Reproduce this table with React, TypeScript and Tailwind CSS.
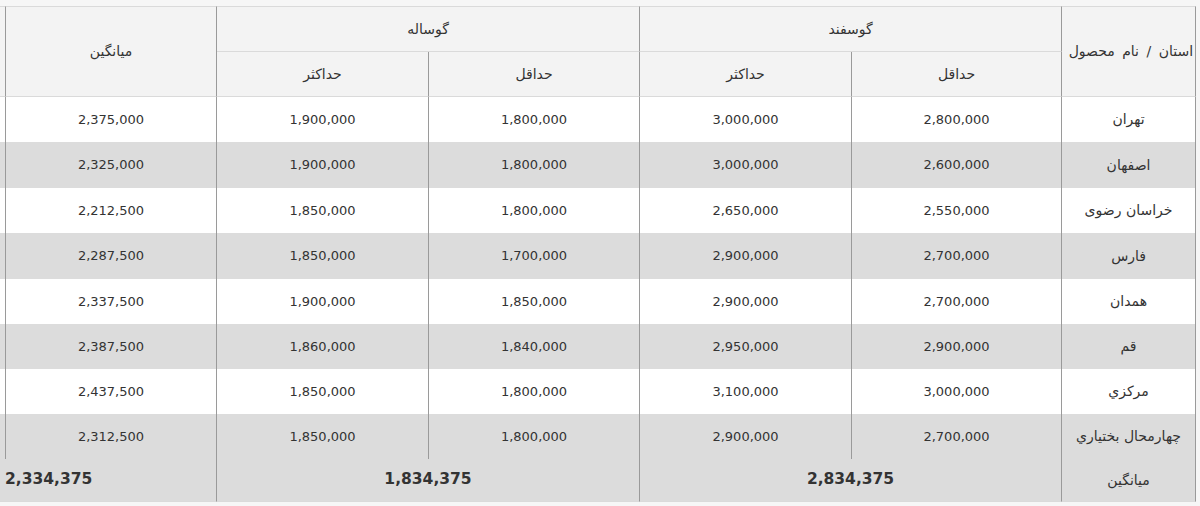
import React from "react";

type Row = { name: string; values: string[] };

// columns in rtl order: gusfand min, gusfand max, gusale min, gusale max, avg
const rows: Row[] = [
    { name: "تهران", values: ["2,800,000", "3,000,000", "1,800,000", "1,900,000", "2,375,000"] },
    { name: "اصفهان", values: ["2,600,000", "3,000,000", "1,800,000", "1,900,000", "2,325,000"] },
    { name: "خراسان رضوی", values: ["2,550,000", "2,650,000", "1,800,000", "1,850,000", "2,212,500"] },
    { name: "فارس", values: ["2,700,000", "2,900,000", "1,700,000", "1,850,000", "2,287,500"] },
    { name: "همدان", values: ["2,700,000", "2,900,000", "1,850,000", "1,900,000", "2,337,500"] },
    { name: "قم", values: ["2,900,000", "2,950,000", "1,840,000", "1,860,000", "2,387,500"] },
    { name: "مرکزي", values: ["3,000,000", "3,100,000", "1,800,000", "1,850,000", "2,437,500"] },
    { name: "چهارمحال بختياري", values: ["2,700,000", "2,900,000", "1,800,000", "1,850,000", "2,312,500"] },
];

const rowHeights = ["h-[45px]", "h-[46px]", "h-[45px]", "h-[46px]", "h-[45px]", "h-[45px]", "h-[45px]", "h-[45px]"];

const vLine = "border-r border-r-[#9a9a9a]";
const hLine = "border-[#dadada]";

export default function App() {
    return (
        <div
            className="w-[1200px] h-[506px] overflow-hidden bg-[#f6f6f6] pt-[6px] pr-[4px] text-[#333]"
            style={{ fontFamily: '"DejaVu Sans", Tahoma, sans-serif' }}
        >
            <table dir="rtl" className="w-[1196px] table-fixed border-separate border-spacing-0 text-[13px]">
                <colgroup>
                    <col className="w-[134px]" />
                    <col className="w-[210px]" />
                    <col className="w-[212px]" />
                    <col className="w-[211px]" />
                    <col className="w-[212px]" />
                    <col className="w-[211px]" />
                    <col className="w-[6px]" />
                </colgroup>
                <thead className="bg-[#f3f3f3] text-[14px]">
                    <tr className="h-[46px]">
                        <th rowSpan={2} className={`${vLine} border-t border-b ${hLine} font-normal whitespace-nowrap text-right pr-[2px] text-[14px] [word-spacing:3px]`}>
                            استان / نام محصول
                        </th>
                        <th colSpan={2} className={`${vLine} border-t border-b ${hLine} font-normal`}>
                            گوسفند
                        </th>
                        <th colSpan={2} className={`${vLine} border-t border-b ${hLine} font-normal`}>
                            گوساله
                        </th>
                        <th rowSpan={2} className={`${vLine} border-t border-b ${hLine} font-normal`}>
                            میانگین
                        </th>
                        <th rowSpan={2} className={`${vLine} border-t border-b ${hLine}`} />
                    </tr>
                    <tr className="h-[45px]">
                        {["حداقل", "حداکثر", "حداقل", "حداکثر"].map((label, i) => (
                            <th key={i} className={`${vLine} border-b ${hLine} font-normal`}>
                                {label}
                            </th>
                        ))}
                    </tr>
                </thead>
                <tbody>
                    {rows.map((row, r) => (
                        <tr key={row.name} className={`${rowHeights[r]} ${r % 2 ? "bg-[#dcdcdc]" : "bg-white"}`}>
                            <td className={`${vLine} text-center whitespace-nowrap text-[14px]`}>{row.name}</td>
                            {row.values.map((v, i) => (
                                <td key={i} className={`${vLine} text-center`}>
                                    {v}
                                </td>
                            ))}
                            <td className={vLine} />
                        </tr>
                    ))}
                    <tr className="h-[43px] bg-[#dcdcdc]">
                        <td className={`${vLine} border-b ${hLine} text-center text-[14px]`}>میانگین</td>
                        <td colSpan={2} className={`${vLine} border-b ${hLine} text-center text-[15.5px] font-bold`}>
                            2,834,375
                        </td>
                        <td colSpan={2} className={`${vLine} border-b ${hLine} text-center text-[15.5px] font-bold`}>
                            1,834,375
                        </td>
                        <td colSpan={2} className={`${vLine} border-b ${hLine} text-left text-[15.5px] font-bold pl-[5px]`}>
                            2,334,375
                        </td>
                    </tr>
                </tbody>
            </table>
        </div>
    );
}
